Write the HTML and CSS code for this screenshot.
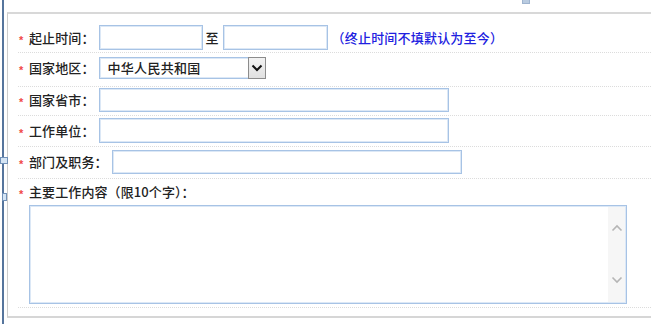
FILE: index.html
```html
<!DOCTYPE html>
<html lang="zh-CN">
<head>
<meta charset="utf-8">
<title>工作经历</title>
<link rel="stylesheet" href="styles.css">
</head>
<body>
<div class="page">
  <div class="rail">
    <div class="rail-line"></div>
    <div class="handle handle-a"></div>
    <div class="handle handle-b"></div>
  </div>
  <div class="main">
    <div class="topbar"><span class="tab-mark"></span></div>
    <div class="panel">
      <div class="row row-1">
        <span class="star">*</span><span class="label">起止时间：</span>
        <span class="field w-date"></span>
        <span class="to">至</span>
        <span class="field w-date2"></span>
        <span class="note">（终止时间不填默认为至今）</span>
      </div>
      <div class="row row-2">
        <span class="star">*</span><span class="label">国家地区：</span>
        <div class="select">
          <span class="select-text">中华人民共和国</span>
          <span class="select-btn">
            <svg width="12" height="8" viewBox="0 0 12 8"><path d="M1.5 1.5 L6 6 L10.5 1.5" fill="none" stroke="#111" stroke-width="2"/></svg>
          </span>
        </div>
      </div>
      <div class="row row-3">
        <span class="star">*</span><span class="label">国家省市：</span>
        <span class="field w-long h24"></span>
      </div>
      <div class="row row-4">
        <span class="star">*</span><span class="label">工作单位：</span>
        <span class="field w-long"></span>
      </div>
      <div class="row row-5">
        <span class="star">*</span><span class="label">部门及职务：</span>
        <span class="field w-long h24"></span>
      </div>
      <div class="row row-6">
        <div class="label-line"><span class="star">*</span><span class="label">主要工作内容（限10个字）：</span></div>
        <div class="textarea">
          <div class="ta-body"></div>
          <div class="ta-scroll">
            <svg width="12" height="8" viewBox="0 0 12 8"><path d="M1.5 6.5 L6 2 L10.5 6.5" fill="none" stroke="#b5b5b5" stroke-width="1.6"/></svg>
            <svg width="12" height="8" viewBox="0 0 12 8"><path d="M1.5 1.5 L6 6 L10.5 1.5" fill="none" stroke="#b5b5b5" stroke-width="1.6"/></svg>
          </div>
        </div>
      </div>
    </div>
  </div>
</div>
</body>
</html>
```
FILE: styles.css
```css
* { box-sizing: border-box; }
html, body { margin: 0; padding: 0; background: #fff; }
body {
  width: 651px;
  height: 324px;
  overflow: hidden;
  font-family: "Noto Sans CJK SC", "Microsoft YaHei", sans-serif;
  font-size: 13px;
  font-weight: 500;
  color: #222;
}
.page { display: flex; height: 324px; }

.rail { position: relative; width: 7px; flex: none; }
.rail-line {
  position: absolute; left: 2px; top: 0; bottom: 0;
  width: 2px; background: #56759d;
}
.handle {
  position: absolute;
  background: #d5e5f5;
  border: 1px solid #7191b8;
}
.handle-a { left: 0; top: 157px; width: 8px; height: 7px; }
.handle-b { left: 2px; top: 193px; width: 5px; height: 8px; }

.main { flex: 1; min-width: 0; }
.topbar { height: 12px; display: flex; }
.tab-mark {
  margin-left: 515px;
  width: 8px; height: 4px;
  background: #b9cbe0;
  border: 1px solid #9fb4cf;
  border-top: none;
}

.panel {
  border-top: 2px solid #d8d8d8;
  border-left: 1px solid #cdcdcd;
  border-bottom: 2px solid #d6d6d6;
  height: 306px;
  padding: 0 0 8px 10px;
}

.row {
  display: flex;
  align-items: center;
  border-bottom: 1px dotted #dcdcdc;
}
.row-1 { padding: 11px 0 2px; }
.row-2 { padding: 4px 0 7px; }
.row-3 { padding: 1px 0 3px; }
.row-4 { padding: 2px 0 3px; }
.row-5 { padding: 3px 0 4px; }
.row-6 { display: block; padding: 3px 0 3px; }

.star {
  width: 11px;
  padding-left: 1px;
  color: #f04848;
  font-family: "Liberation Sans", sans-serif;
  font-size: 11px;
  font-weight: 700;
  line-height: 20px;
  position: relative;
  top: 2px;
  flex: none;
}
.label { line-height: 20px; margin-right: 4px; white-space: nowrap; letter-spacing: 0.1px; }
.label-line { display: flex; align-items: center; height: 20px; }

.field {
  display: block;
  height: 25px;
  border: 1px solid #a7c3e5;
  box-shadow: inset 0 0 0 1px #dce8f6;
  background: #fff;
  flex: none;
}
.h24 { height: 24px; }
.w-date { width: 104px; }
.w-date2 { width: 105px; }
.w-long { width: 350px; }

.to { margin: 0 4px 0 3px; line-height: 20px; }
.note {
  margin-left: 4px;
  color: #2020e0;
  line-height: 20px;
  white-space: nowrap;
  letter-spacing: 0.2px;
}

.select {
  display: flex;
  width: 167px;
  height: 22px;
  border: 1px solid #a7c3e5;
  box-shadow: inset 0 0 0 1px #dce8f6;
  align-items: center;
  flex: none;
}
.select-text { flex: 1; padding-left: 8px; line-height: 20px; letter-spacing: 0.3px; }
.select-btn {
  width: 18px;
  height: 22px;
  margin: -1px -1px -1px 0;
  border: 1px solid #8c8c8c;
  background: linear-gradient(#f2f2f2, #e0e0e0);
  display: flex;
  align-items: center;
  justify-content: center;
}

.textarea {
  margin: 3px 0 0 11px;
  width: 598px;
  height: 99px;
  border: 1px solid #a7c3e5;
  box-shadow: inset 0 0 0 1px #dce8f6;
  display: flex;
}
.ta-body { flex: 1; }
.ta-scroll {
  width: 17px;
  margin: 1px 1px 1px 0;
  background: #f6f6f6;
  display: flex;
  flex-direction: column;
  justify-content: space-between;
  align-items: center;
  padding: 17px 0 18px;
}
```
